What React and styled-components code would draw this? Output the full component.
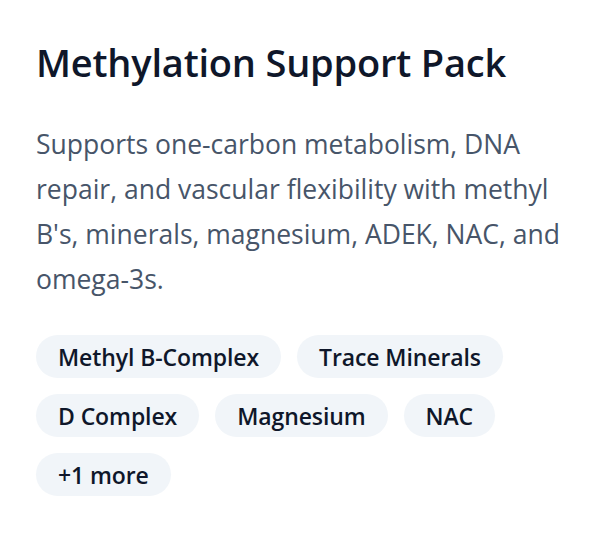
import React from "react";
import styled, { createGlobalStyle } from "styled-components";

const Global = createGlobalStyle`
  html, body { margin: 0; padding: 0; background: #ffffff; }
  body { font-family: "Open Sans", "Noto Sans", sans-serif; }
`;

const Card = styled.div`
  box-sizing: border-box;
  width: 592px;
  padding: 38px 16px 40px 36px;
  display: flex;
  flex-direction: column;
`;

const Title = styled.h1`
  margin: 0;
  font-size: 38px;
  line-height: 48px;
  font-weight: 600;
  color: #0f172a;
  letter-spacing: -0.2px;
`;

const Description = styled.p`
  margin: 36px 0 0;
  font-size: 26.5px;
  line-height: 45px;
  font-weight: 400;
  color: #475569;
`;

const Tags = styled.div`
  margin-top: 33px;
  display: flex;
  flex-wrap: wrap;
  gap: 16px;
  max-width: 520px;
`;

const Tag = styled.span`
  display: inline-flex;
  align-items: center;
  height: 43px;
  padding: 0 22px;
  border-radius: 999px;
  background: #f1f5f9;
  color: #0f172a;
  font-size: 23px;
  font-weight: 600;
  letter-spacing: -0.1px;
`;

const tags = ["Methyl B-Complex", "Trace Minerals", "D Complex", "Magnesium", "NAC", "+1 more"];

export default function App() {
  return (
    <>
      <Global />
      <Card>
        <Title>Methylation Support Pack</Title>
        <Description>
          Supports one-carbon metabolism, DNA repair, and vascular flexibility with methyl B's,
          minerals, magnesium, ADEK, NAC, and omega-3s.
        </Description>
        <Tags>
          {tags.map((t) => (
            <Tag key={t}>{t}</Tag>
          ))}
        </Tags>
      </Card>
    </>
  );
}
